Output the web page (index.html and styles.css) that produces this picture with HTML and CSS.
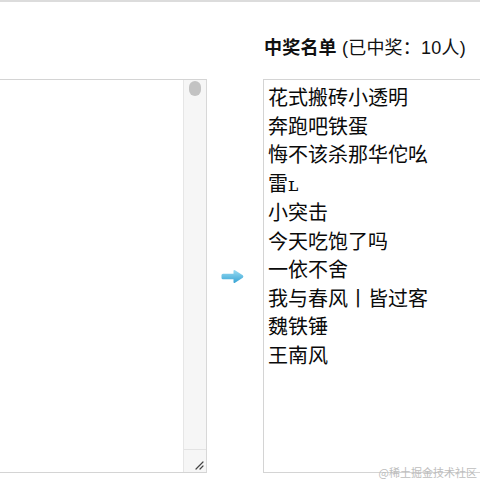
FILE: index.html
```html
<!DOCTYPE html>
<html lang="zh">
<head>
<meta charset="utf-8">
<link rel="stylesheet" href="styles.css">
</head>
<body>
<div class="topline"></div>
<div class="main">
  <div class="col-left">
    <div class="box box-left">
      <div class="box-body"></div>
      <div class="scrollbar">
        <div class="track"><div class="thumb"></div></div>
        <div class="corner">
          <svg width="12" height="12" viewBox="0 0 12 12"><path d="M11 4 L4 11 M11 8 L8 11" stroke="#444" stroke-width="1.2" stroke-linecap="round"/></svg>
        </div>
      </div>
    </div>
  </div>
  <div class="col-arrow">
    <svg width="23" height="15" viewBox="0 0 23 15">
      <defs>
        <linearGradient id="g" x1="0" y1="0" x2="0" y2="1">
          <stop offset="0" stop-color="#9adcf2"/>
          <stop offset="1" stop-color="#36a3d4"/>
        </linearGradient>
      </defs>
      <path d="M2 4.8 H12.5 V2 Q12.5 0.3 14 1.2 L21.8 6.3 Q23 7.5 21.8 8.7 L14 13.8 Q12.5 14.7 12.5 13 V10.2 H2 Q0.5 10.2 0.5 8.7 V6.3 Q0.5 4.8 2 4.8 Z" fill="url(#g)"/>
    </svg>
  </div>
  <div class="col-right">
    <div class="title"><b>中奖名单</b> (已中奖：10人)</div>
    <div class="box box-right">
      <div class="line">花式搬砖小透明</div>
      <div class="line">奔跑吧铁蛋</div>
      <div class="line">悔不该杀那华佗吆</div>
      <div class="line">雷<span class="sc">ʟ</span></div>
      <div class="line">小突击</div>
      <div class="line">今天吃饱了吗</div>
      <div class="line">一依不舍</div>
      <div class="line">我与春风丨皆过客</div>
      <div class="line">魏铁锤</div>
      <div class="line">王南风</div>
    </div>
  </div>
</div>
<div class="watermark">@稀土掘金技术社区</div>
</body>
</html>
```
FILE: styles.css
```css
html, body {
  margin: 0;
  padding: 0;
  background: #fff;
  overflow: hidden;
  width: 480px;
  height: 480px;
  position: relative;
  font-family: "Liberation Sans", "Noto Sans CJK SC", sans-serif;
  color: #111;
}
.topline {
  height: 2px;
  background: #dcdcdc;
}
.main {
  display: flex;
  align-items: flex-end;
  margin-left: -23px;
  padding-top: 33px;
}
.box {
  box-sizing: border-box;
  height: 394px;
  border: 1px solid #d4d4d4;
  background: #fff;
}
.col-left {
  flex: none;
}
.box-left {
  width: 230px;
  display: flex;
  border-right-color: #d8d8d8;
}
.box-body {
  flex: 1;
}
.scrollbar {
  width: 22px;
  display: flex;
  flex-direction: column;
  background: #f6f6f6;
  border-left: 1px solid #e6e6e6;
}
.track {
  flex: 1;
  display: flex;
  justify-content: center;
  padding-top: 1px;
}
.thumb {
  width: 12px;
  height: 15px;
  border-radius: 7px;
  background: #c3c3c3;
}
.corner {
  height: 23px;
  border-top: 1px solid #e3e3e3;
  display: flex;
  align-items: flex-end;
  justify-content: flex-end;
  padding: 0 2px 2px 0;
  box-sizing: border-box;
}
.col-arrow {
  flex: none;
  width: 56px;
  height: 394px;
  display: flex;
  align-items: center;
  padding-left: 14px;
  box-sizing: border-box;
}
.col-arrow svg {
  display: block;
}
.col-right {
  flex: none;
  width: 240px;
}
.title {
  font-size: 18px;
  line-height: 26px;
  margin-bottom: 18px;
  padding-left: 1px;
  white-space: nowrap;
  color: #111;
  letter-spacing: 0.2px;
}
.title b {
  font-weight: bold;
}
.box-right {
  padding: 3px 4px;
  font-family: "Noto Sans CJK SC", sans-serif;
  font-size: 20px;
  line-height: 28.5px;
  color: #0a0a0a;
}
.sc {
  font-family: "DejaVu Serif", serif;
  font-size: 19px;
}
.line {
  white-space: nowrap;
}
.watermark {
  position: absolute;
  right: 3px;
  bottom: 1px;
  font-family: "Noto Sans CJK SC", sans-serif;
  font-size: 11px;
  line-height: 14px;
  color: #bdbdbd;
}
```
